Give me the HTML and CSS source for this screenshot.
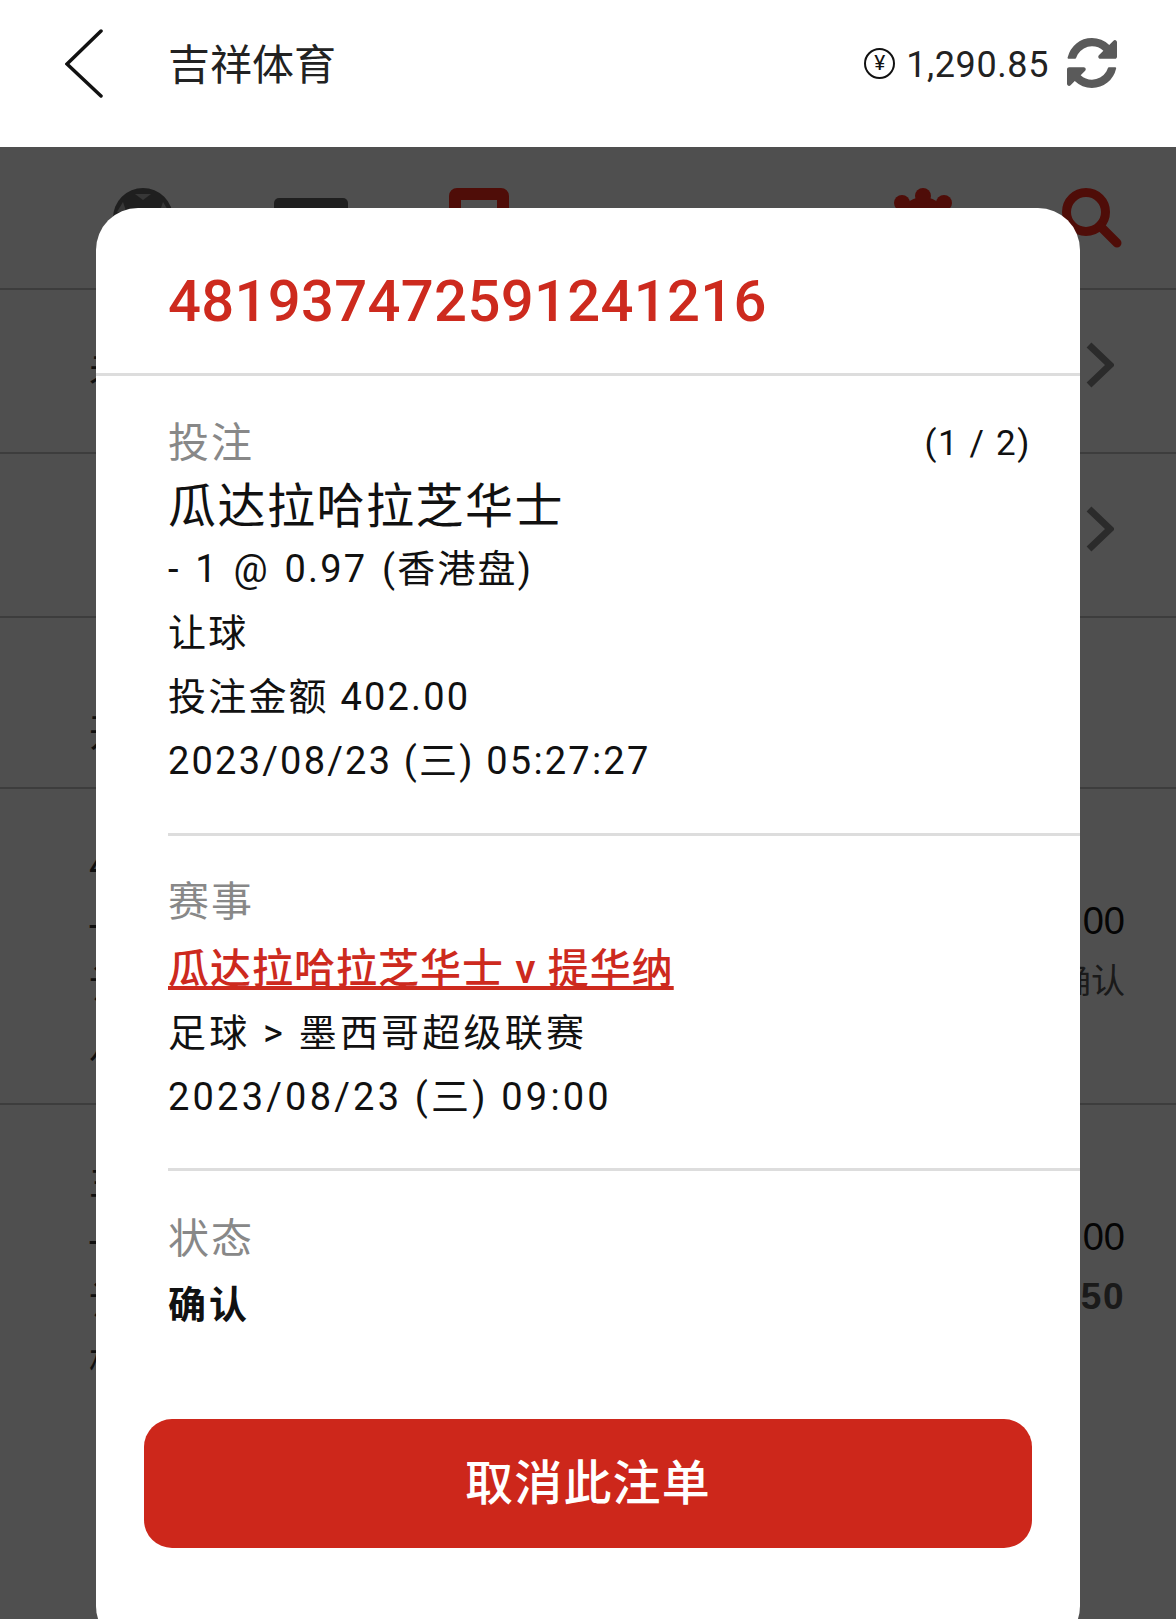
FILE: index.html
```html
<!DOCTYPE html>
<html lang="zh-CN">
<head>
    <meta charset="utf-8">
    <title>吉祥体育</title>
    <link rel="stylesheet" href="styles.css">
</head>
<body>
    <div class="page">
        <header class="topbar">
            <svg class="back-icon" viewBox="0 0 38 69"><polyline points="36,2 2,35 36,67"/></svg>
            <div class="topbar__title">吉祥体育</div>
            <div class="balance">
                <span class="balance__coin">¥</span>
                <span class="balance__amount">1,290.85</span>
                <svg class="refresh-icon" viewBox="0 0 1536 1536"><path d="M1511 928q0 5-1 7-64 268-268 434.5t-478 166.5q-146 0-282.5-55t-243.5-157l-129 129q-19 19-45 19t-45-19-19-45v-448q0-26 19-45t45-19h448q26 0 45 19t19 45-19 45l-137 137q71 66 161 102t187 36q134 0 250-65t186-179q11-17 53-117 8-23 30-23h192q13 0 22.5 9.5t9.5 22.5zm25-800v448q0 26-19 45t-45 19h-448q-26 0-45-19t-19-45 19-45l138-138q-148-137-349-137-134 0-250 65t-186 179q-11 17-53 117-8 23-30 23h-199q-13 0-22.5-9.5t-9.5-22.5v-7q65-268 270-434.5t480-166.5q146 0 284 55.5t245 156.5l130-129q19-19 45-19t45 19 19 45z"/></svg>
            </div>
        </header>

        <!-- страница под затемнением -->
        <main class="behind">
            <nav class="tabs">
                <svg class="tab-icon" viewBox="0 0 60 60"><circle cx="30" cy="30" r="30" fill="#666"/><polygon points="22,6 38,6 30,12" fill="#b0b0b0"/><polygon points="4,24 10,14 14,26" fill="#b0b0b0"/><polygon points="56,24 50,14 46,26" fill="#b0b0b0"/></svg>
                <svg class="tab-icon tab-icon--wide" viewBox="0 0 74 50"><rect y="0" width="74" height="50" rx="5" fill="#666"/></svg>
                <svg class="tab-icon" viewBox="0 0 60 60"><rect x="6" y="6" width="48" height="48" rx="2" fill="none" stroke="#ff2a1a" stroke-width="12"/></svg>
                <svg class="tab-icon tab-icon--gear" viewBox="0 0 60 60"><circle cx="30" cy="34" r="25" fill="#ff2a1a"/><circle cx="30" cy="8" r="8" fill="#ff2a1a"/><circle cx="9" cy="15" r="8" fill="#ff2a1a"/><circle cx="51" cy="15" r="8" fill="#ff2a1a"/></svg>
                <svg class="tab-icon" viewBox="0 0 60 60"><circle cx="24" cy="24" r="19.5" fill="none" stroke="#ff2a1a" stroke-width="9"/><line x1="38" y1="38" x2="55" y2="55" stroke="#ff2a1a" stroke-width="9" stroke-linecap="round"/></svg>
            </nav>
            <div class="row row--menu">
                <span class="row__label">未结算</span>
                <svg class="row__arrow" viewBox="0 0 28 46"><polyline points="3,3 24,23 3,43"/></svg>
            </div>
            <div class="row row--menu">
                <span class="row__label"></span>
                <svg class="row__arrow" viewBox="0 0 28 46"><polyline points="3,3 24,23 3,43"/></svg>
            </div>
            <div class="row row--head">
                <span class="row__label">开始</span>
            </div>
            <div class="row row--bet">
                <div class="row__left">
                    <span>48</span>
                    <span>- 1</span>
                    <span>让球</span>
                    <span>八月</span>
                </div>
                <div class="row__right">
                    <span class="row__stake">402.00</span>
                    <span class="row__status">确认</span>
                </div>
            </div>
            <div class="row row--bet">
                <div class="row__left">
                    <span>主队</span>
                    <span>- 1</span>
                    <span>让球</span>
                    <span>杯赛</span>
                </div>
                <div class="row__right">
                    <span class="row__stake">300.00</span>
                    <span class="row__status row__status--win">12.50</span>
                </div>
            </div>
        </main>
        <div class="overlay"></div>

        <section class="modal">
            <h2 class="modal__id">481937472591241216</h2>

            <div class="block block--first">
                <div class="block__head">
                    <span class="block__label">投注</span>
                    <span class="block__count">(1 / 2)</span>
                </div>
                <div class="bet-team">瓜达拉哈拉芝华士</div>
                <div class="line line--odds">- 1 @ 0.97 (香港盘)</div>
                <div class="line">让球</div>
                <div class="line">投注金额 402.00</div>
                <div class="line">2023/08/23 (三) 05:27:27</div>
            </div>

            <div class="block block--match">
                <div class="block__label">赛事</div>
                <a class="match-link" href="#">瓜达拉哈拉芝华士 v 提华纳</a>
                <div class="line line--wide">足球 &gt; 墨西哥超级联赛</div>
                <div class="line line--wide">2023/08/23 (三) 09:00</div>
            </div>

            <div class="block block--status">
                <div class="block__label">状态</div>
                <div class="line line--bold">确认</div>
            </div>

            <button class="cancel-btn">取消此注单</button>
        </section>
    </div>
</body>
</html>
```

FILE: styles.css
```css
/* Основные стили */
html,
body {
    margin: 0;
    padding: 0;
    background-color: #ffffff;
}

body {
    font-family: 'Roboto', 'Noto Sans CJK SC', sans-serif;
    color: #111111;
}

.page {
    position: relative;
    width: 1176px;
    height: 1619px;
    overflow: hidden;
}

/* Верхняя панель */
.topbar {
    height: 147px;
    display: flex;
    align-items: center;
    padding: 0 59px 21px 65px;
    box-sizing: border-box;
    background-color: #ffffff;
}

.back-icon {
    width: 38px;
    height: 69px;
    fill: none;
    stroke: #111111;
    stroke-width: 3.5;
    stroke-linecap: round;
    stroke-linejoin: miter;
}

.topbar__title {
    margin-left: 65px;
    margin-bottom: 4px;
    font-size: 42px;
    color: #222222;
}

.balance {
    margin-left: auto;
    display: flex;
    align-items: center;
}

.balance__coin {
    width: 27px;
    height: 27px;
    border: 2px solid #111111;
    border-radius: 50%;
    display: flex;
    align-items: center;
    justify-content: center;
    font-size: 21px;
    line-height: 1;
}

.balance__amount {
    margin-left: 11px;
    margin-top: 4px;
    font-size: 36px;
    letter-spacing: 0.6px;
    color: #222222;
}

.refresh-icon {
    margin-left: 18px;
    width: 50px;
    height: 50px;
    fill: #5a5a5a;
}

/* Страница под затемнением */
.behind {
    height: 1472px;
    background-color: #ffffff;
}

.tabs {
    height: 141px;
    padding: 41px 54px 0 113px;
    box-sizing: border-box;
    display: flex;
    align-items: flex-start;
    gap: 101px;
}

.tab-icon {
    width: 60px;
    height: 60px;
    flex: none;
}

.tab-icon--wide {
    width: 74px;
    height: 50px;
    margin-top: 10px;
}

.tab-icon--gear {
    margin-left: auto;
    margin-right: 8px;
    margin-top: 0;
}

.row {
    display: flex;
    justify-content: space-between;
    padding: 0 51px 0 89px;
    box-sizing: border-box;
    border-top: 2px solid #c4c4c4;
    font-size: 38px;
    color: #333333;
}

.row--menu {
    height: 164px;
    align-items: center;
    padding-right: 62px;
    padding-bottom: 12px;
}

.row--head {
    height: 171px;
    align-items: flex-end;
    padding-bottom: 30px;
}

.row--bet {
    height: 316px;
    padding-top: 46px;
}

.row__arrow {
    width: 28px;
    height: 46px;
    fill: none;
    stroke: #8c8c8c;
    stroke-width: 7;
}

.row__left,
.row__right {
    display: flex;
    flex-direction: column;
    line-height: 60px;
}

.row__right {
    align-items: flex-end;
    padding-top: 56px;
}

.row__stake {
    color: #111111;
    font-family: 'Liberation Sans', 'Noto Sans CJK SC', sans-serif;
}

.row__status {
    font-size: 34px;
    color: #555555;
}

.row__status--win {
    font-family: 'Liberation Sans', sans-serif;
    font-size: 37px;
    font-weight: 700;
    letter-spacing: 1.5px;
    color: #555555;
}

.overlay {
    position: absolute;
    left: 0;
    right: 0;
    top: 147px;
    bottom: 0;
    background-color: rgba(0, 0, 0, 0.69);
}

/* Окно с деталями ставки */
.modal {
    position: absolute;
    left: 96px;
    top: 208px;
    width: 984px;
    height: 1440px;
    background-color: #ffffff;
    border-radius: 42px;
}

.modal__id {
    margin: 0;
    height: 165px;
    padding: 0 0 0 72px;
    line-height: 186px;
    font-size: 58px;
    font-weight: 500;
    letter-spacing: 0.3px;
    color: #cd2a1e;
    border-bottom: 3px solid #dddddd;
}

.block {
    margin-left: 72px;
    padding: 32px 49px 40px 0;
    border-top: 3px solid #dddddd;
}

.block--first {
    border-top: none;
    padding-top: 33px;
}

.block--match {
    padding-bottom: 39px;
}

.block--status {
    padding-top: 34px;
    padding-bottom: 0;
}

.block__head {
    display: flex;
    justify-content: space-between;
    align-items: center;
}

.block__label {
    font-size: 41px;
    line-height: 68px;
    color: #888888;
    letter-spacing: 2px;
}

.block__count {
    font-size: 35px;
    letter-spacing: 1.6px;
}

.bet-team {
    font-size: 48px;
    line-height: 60px;
    letter-spacing: 1.5px;
    color: #111111;
}

.line {
    font-size: 38px;
    line-height: 64px;
    letter-spacing: 2.2px;
    color: #111111;
}

.line--odds {
    word-spacing: 3px;
}

.line--wide {
    letter-spacing: 3.2px;
}

.line--bold {
    font-weight: 700;
    letter-spacing: 3px;
}

.match-link {
    display: block;
    width: fit-content;
    margin: 2px 0 1px;
    font-size: 41px;
    line-height: 62px;
    font-weight: 500;
    letter-spacing: 1px;
    color: #cd2a1e;
    text-decoration: underline;
}

.cancel-btn {
    display: block;
    position: absolute;
    left: 48px;
    top: 1211px;
    width: 888px;
    height: 129px;
    padding: 0 0 10px;
    border: none;
    border-radius: 28px;
    background-color: #cd271b;
    color: #ffffff;
    font-family: inherit;
    font-size: 48px;
    font-weight: 500;
    letter-spacing: 1.2px;
}
```
